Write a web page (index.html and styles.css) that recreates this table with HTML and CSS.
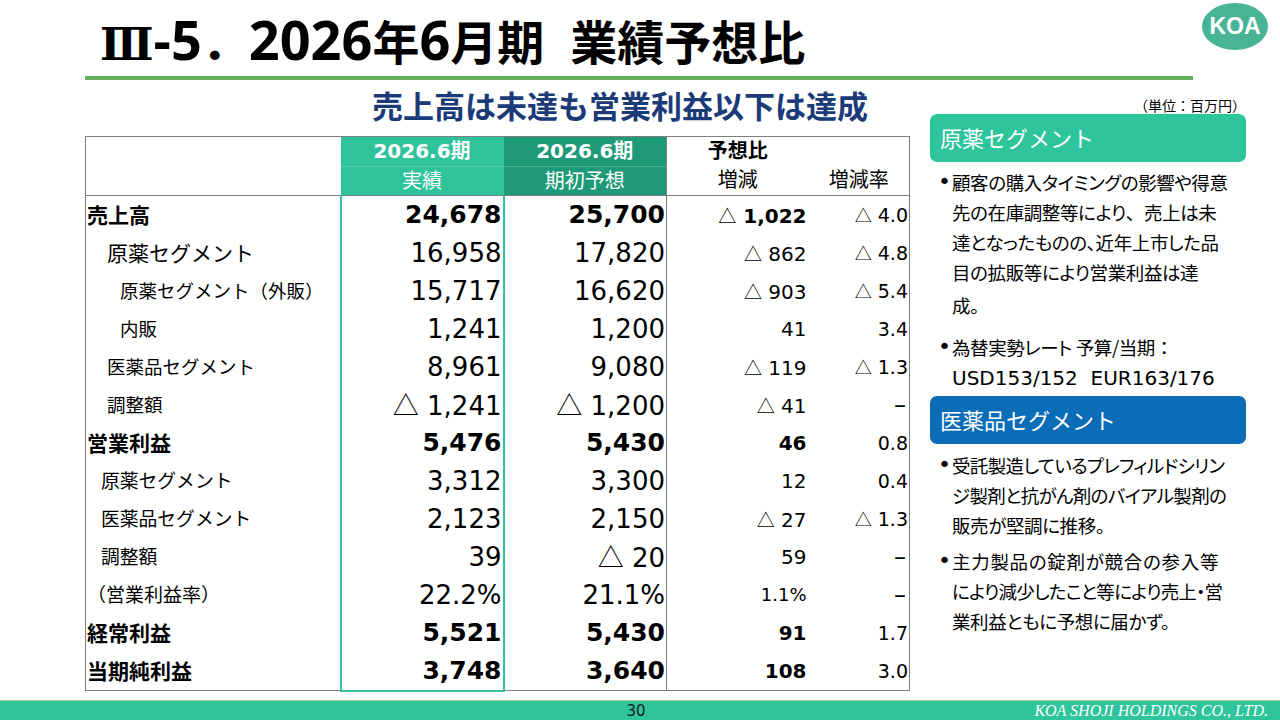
FILE: index.html
```html
<!DOCTYPE html>
<html lang="ja">
<head>
<meta charset="utf-8">
<title>業績予想比</title>
<link rel="stylesheet" href="styles.css">
</head>
<body>
<div class="page">
  <header class="top">
    <h1 class="title"><span class="rn">Ⅲ</span><span class="lat">-5</span>．<span class="lat">2026</span>年<span class="lat">6</span>月期<span class="sp"></span>業績予想比</h1>
    <div class="logo">KOA</div>
  </header>
  <div class="rule"></div>
  <main class="content">
    <section class="left">
      <h2 class="subtitle">売上高は未達も営業利益以下は達成</h2>
      <table class="tbl">
        <colgroup>
          <col class="c-label"><col class="c-num"><col class="c-num"><col class="c-diff"><col class="c-rate">
        </colgroup>
        <thead>
          <tr class="h1">
            <th class="blank" rowspan="2"></th>
            <th class="act hb">2026.6期</th>
            <th class="fc hb">2026.6期</th>
            <th class="sep hb">予想比</th>
            <th></th>
          </tr>
          <tr class="h2">
            <th class="act sub">実績</th>
            <th class="fc sub">期初予想</th>
            <th class="sep">増減</th>
            <th>増減率</th>
          </tr>
        </thead>
        <tbody>
          <tr class="bold">
            <td class="lbl l0">売上高</td>
            <td class="num act">24,678</td>
            <td class="num">25,700</td>
            <td class="diff sep"><span class="tri">△</span> 1,022</td>
            <td class="rate"><span class="tri">△</span> 4.0</td>
          </tr>
          <tr>
            <td class="lbl l1 big">原薬セグメント</td>
            <td class="num act">16,958</td>
            <td class="num">17,820</td>
            <td class="diff sep"><span class="tri">△</span> 862</td>
            <td class="rate"><span class="tri">△</span> 4.8</td>
          </tr>
          <tr>
            <td class="lbl l2">原薬セグメント（外販）</td>
            <td class="num act">15,717</td>
            <td class="num">16,620</td>
            <td class="diff sep"><span class="tri">△</span> 903</td>
            <td class="rate"><span class="tri">△</span> 5.4</td>
          </tr>
          <tr>
            <td class="lbl l2">内販</td>
            <td class="num act">1,241</td>
            <td class="num">1,200</td>
            <td class="diff sep">41</td>
            <td class="rate">3.4</td>
          </tr>
          <tr>
            <td class="lbl l1">医薬品セグメント</td>
            <td class="num act">8,961</td>
            <td class="num">9,080</td>
            <td class="diff sep"><span class="tri">△</span> 119</td>
            <td class="rate"><span class="tri">△</span> 1.3</td>
          </tr>
          <tr>
            <td class="lbl l1">調整額</td>
            <td class="num act"><span class="tri">△</span> 1,241</td>
            <td class="num"><span class="tri">△</span> 1,200</td>
            <td class="diff sep"><span class="tri">△</span> 41</td>
            <td class="rate"><span class="dash">–</span></td>
          </tr>
          <tr class="bold">
            <td class="lbl l0">営業利益</td>
            <td class="num act">5,476</td>
            <td class="num">5,430</td>
            <td class="diff sep">46</td>
            <td class="rate">0.8</td>
          </tr>
          <tr>
            <td class="lbl l1b">原薬セグメント</td>
            <td class="num act">3,312</td>
            <td class="num">3,300</td>
            <td class="diff sep">12</td>
            <td class="rate">0.4</td>
          </tr>
          <tr>
            <td class="lbl l1b">医薬品セグメント</td>
            <td class="num act">2,123</td>
            <td class="num">2,150</td>
            <td class="diff sep"><span class="tri">△</span> 27</td>
            <td class="rate"><span class="tri">△</span> 1.3</td>
          </tr>
          <tr>
            <td class="lbl l1b">調整額</td>
            <td class="num act">39</td>
            <td class="num"><span class="tri">△</span> 20</td>
            <td class="diff sep">59</td>
            <td class="rate"><span class="dash">–</span></td>
          </tr>
          <tr>
            <td class="lbl lp">（営業利益率）</td>
            <td class="num act">22.2%</td>
            <td class="num">21.1%</td>
            <td class="diff sep small">1.1%</td>
            <td class="rate"><span class="dash">–</span></td>
          </tr>
          <tr class="bold">
            <td class="lbl l0">経常利益</td>
            <td class="num act">5,521</td>
            <td class="num">5,430</td>
            <td class="diff sep">91</td>
            <td class="rate">1.7</td>
          </tr>
          <tr class="bold last">
            <td class="lbl l0">当期純利益</td>
            <td class="num act">3,748</td>
            <td class="num">3,640</td>
            <td class="diff sep">108</td>
            <td class="rate">3.0</td>
          </tr>
        </tbody>
      </table>
    </section>
    <aside class="right">
      <div class="unit">（単位：百万円）</div>
      <div class="seg seg-a">原薬セグメント</div>
      <div class="bul first"><span class="dot">•</span><p>顧客の購入タイミングの影響や得意<br>先の在庫調整等により<span class="fw">、</span>売上は未<br>達となったものの、近年上市した品<br>目の拡販等により営業利益は達<br><span class="gap">成。</span></p></div>
      <div class="bul next"><span class="dot">•</span><p>為替実勢レート 予算/当期<span class="fw">：</span><br><span class="lat2">USD153/152&nbsp; EUR163/176</span></p></div>
      <div class="seg seg-b">医薬品セグメント</div>
      <div class="bul first2"><span class="dot">•</span><p><span class="tight">受託製造しているプレフィルドシリン</span><br><span class="tight">ジ製剤と抗がん剤のバイアル製剤の</span><br>販売が堅調に推移。</p></div>
      <div class="bul next2"><span class="dot">•</span><p><span class="wide">主力製品の錠剤が競合の参入等</span><br><span class="snug">により減少したこと等により売上・営</span><br>業利益ともに予想に届かず。</p></div>
    </aside>
  </main>
  <footer class="footer">
    <span class="pno">30</span>
    <span class="co">KOA SHOJI HOLDINGS CO., LTD.</span>
  </footer>
</div>
</body>
</html>
```
FILE: styles.css
```css
* { box-sizing: border-box; }
html, body { margin: 0; padding: 0; }
body {
  width: 1280px;
  height: 720px;
  overflow: hidden;
  background: #fff;
  color: #000;
  font-family: "Noto Sans CJK JP", sans-serif;
}
.page {
  width: 1280px;
  height: 720px;
  display: flex;
  flex-direction: column;
}

/* header */
.top {
  height: 76px;
  display: flex;
  justify-content: space-between;
  align-items: flex-start;
}
.title {
  margin: 0;
  padding-left: 100px;
  padding-top: 4px;
  font-size: 47px;
  line-height: 72px;
  font-weight: 700;
  white-space: nowrap;
  font-family: "Noto Sans CJK JP", sans-serif;
}
.title .lat {
  font-family: "Open Sans", sans-serif;
  font-size: 54px;
  line-height: 0;
}
.title .rn {
  font-family: "DejaVu Serif", serif;
  font-size: 44px;
  line-height: 0;
}
.title .sp {
  display: inline-block;
  width: 26px;
}
.logo {
  width: 66px;
  height: 47px;
  margin: 3px 12px 0 0;
  border-radius: 50%;
  background: #47b595;
  color: #fff;
  font: 700 23px "Liberation Sans", sans-serif;
  display: flex;
  align-items: center;
  justify-content: center;
}
.rule {
  height: 4px;
  width: 1108px;
  margin-left: 85px;
  background: #56b35d;
  border-bottom: 1px solid #7fa05a;
}

/* content */
.content {
  flex: 1;
  display: flex;
}
.left {
  width: 824px;
  margin-left: 85px;
}
.subtitle {
  margin: 0;
  height: 56px;
  line-height: 50px;
  padding-left: 287px;
  font-size: 31px;
  font-weight: 700;
  color: #1b3a78;
  white-space: nowrap;
}

/* table */
.tbl {
  width: 824px;
  border-collapse: collapse;
  table-layout: fixed;
  border: 1px solid #7f7f7f;
}
.c-label { width: 255px; }
.c-num { width: 163px; }
.c-diff { width: 142px; }
.c-rate { width: 101px; }
.tbl th, .tbl td { padding: 0; }
.tbl thead tr.h1 { height: 30px; }
.tbl thead tr.h2 { height: 29px; }
.tbl thead tr.h2 th, .tbl th.blank { border-bottom: 1px solid #7f7f7f; }
.tbl th {
  font-size: 20px;
  font-weight: 400;
  line-height: 27px;
  text-align: center;
  font-family: "DejaVu Sans", "Noto Sans CJK JP", sans-serif;
}
.tbl th.hb { font-weight: 700; }
.tbl th.act { background: #2fc39c; color: #fff; }
.tbl th.fc { background: #1f9a78; color: #fff; }
.tbl th.sub { border-top: 1px solid rgba(255, 255, 255, 0.18); }
.sep { border-left: 1px solid #7f7f7f; }

.tbl tbody tr { height: 38px; }
.tbl td {
  line-height: 36px;
  white-space: nowrap;
  font-family: "DejaVu Sans", "Noto Sans CJK JP", sans-serif;
}
.lbl {
  font-family: "Noto Sans CJK JP", sans-serif !important;
  font-size: 18.5px;
  padding-bottom: 2px !important;
}
.l0 { padding-left: 1px !important; font-size: 21px; font-weight: 700; }
.l1 { padding-left: 21px !important; }
.l1.big { font-size: 21px; }
.l1b { padding-left: 15px !important; font-size: 18.8px; }
.l2 { padding-left: 34px !important; }
.lp { padding-left: 1px !important; font-size: 19px; }

.num {
  text-align: right;
  font-size: 26px;
  padding-right: 1px !important;
}
.bold .num { font-weight: 700; font-size: 25px; }
.num.act {
  border-left: 2px solid #35c09e;
  border-right: 2px solid #35c09e;
}
.last .num.act { border-bottom: 2px solid #35c09e; }
.diff {
  text-align: right;
  font-size: 20px;
  padding-right: 2px !important;
}
.bold .diff { font-weight: 700; }
.diff.small { font-size: 18px; }
.rate {
  text-align: right;
  font-size: 19px;
  padding-right: 1px !important;
}
.dash {
  font-size: 24px;
  padding-right: 2px;
}
.tri {
  font-family: "Noto Sans CJK JP", sans-serif;
  font-weight: 400;
}
.rate .tri { font-size: 17px; }
.diff .tri { font-size: 18px; }

/* right panel */
.right {
  width: 316px;
  margin-left: 21px;
  padding-top: 17px;
}
.unit {
  font-size: 14px;
  line-height: 17px;
  text-align: right;
  padding-right: 0;
  white-space: nowrap;
}
.seg {
  height: 48px;
  border-radius: 7px;
  color: #fff;
  font-size: 22px;
  line-height: 46px;
  padding-left: 10px;
  white-space: nowrap;
}
.seg-a { background: #2ec49c; }
.seg-b { background: #0b6db8; margin-top: 3px; }
.bul {
  display: flex;
  padding-left: 8px;
  font-size: 18.5px;
  letter-spacing: -0.4px;
  line-height: 30px;
  font-feature-settings: "palt";
  white-space: nowrap;
}
.bul p { margin: 0; }
.fw { font-feature-settings: normal; }
.tight { letter-spacing: -0.65px; }
.wide { letter-spacing: 0.7px; }
.snug { letter-spacing: -0.8px; }
.dot {
  width: 14px;
  flex: none;
  font-family: "DejaVu Sans", sans-serif;
  font-size: 22px;
  line-height: 30px;
  letter-spacing: 0;
}
.bul.first { margin-top: 5px; }
.bul.next { margin-top: 12px; }
.bul.first2 { margin-top: 6px; }
.bul.next2 { margin-top: 6px; }
.gap { display: inline-block; padding-top: 3px; }
.lat2 {
  font-family: "DejaVu Sans", sans-serif;
  font-size: 20px;
  letter-spacing: 0;
}

/* footer */
.footer {
  height: 20px;
  background: #2ec49c;
  border-top: 1px solid #b3c98e;
  display: grid;
  grid-template-columns: 1fr auto 1fr;
  align-items: center;
}
.pno {
  grid-column: 2;
  font: 15px "DejaVu Sans", sans-serif;
  color: #1a1a1a;
  padding-right: 8px;
  line-height: 18px;
}
.co {
  grid-column: 3;
  justify-self: end;
  padding-right: 12px;
  font: italic 16px "Liberation Serif", serif;
  color: #fff;
  line-height: 18px;
}
```
